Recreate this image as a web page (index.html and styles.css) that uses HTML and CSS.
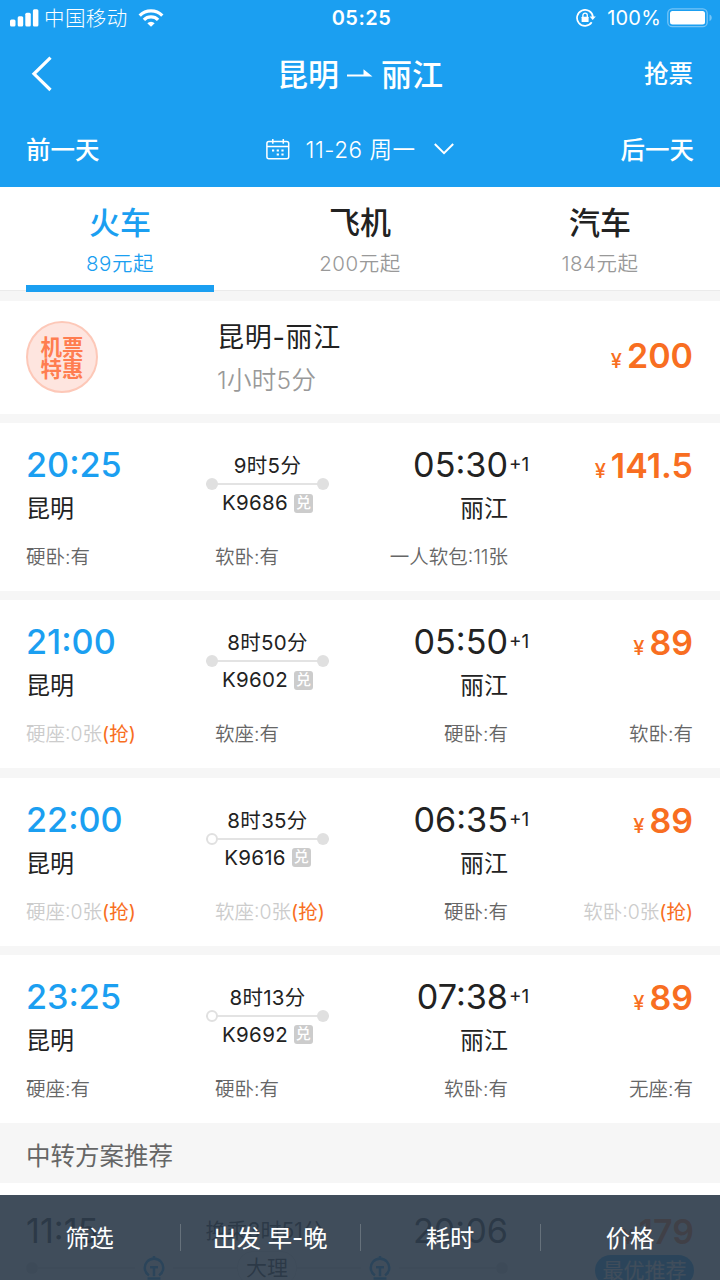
FILE: index.html
```html
<!DOCTYPE html>
<html lang="zh-CN">
<head>
    <meta charset="UTF-8">
    <meta name="viewport" content="width=device-width, initial-scale=1.0">
    <title>昆明 - 丽江</title>
    <link rel="stylesheet" href="styles.css">
</head>
<body>
    <div class="page">
        <header class="header">
            <div class="status">
                <div class="status-left">
                    <svg width="29" height="18" viewBox="0 0 29 18" fill="#fff">
                        <rect x="0" y="10.500" width="5.500" height="7" rx="1.500"/>
                        <rect x="7.700" y="7.300" width="5.500" height="10.200" rx="1.500"/>
                        <rect x="15.300" y="3.800" width="5.500" height="13.700" rx="1.500"/>
                        <rect x="22.900" y="0.300" width="5.500" height="17.200" rx="1.500"/>
                    </svg>
                    <span class="carrier">中国移动</span>
                    <svg width="26" height="18" viewBox="0 0 26 18" fill="none" stroke="#fff" stroke-width="3.300">
                        <path d="M1.700 6.600a16 16 0 0 1 22.600 0"/>
                        <path d="M5.900 10.900a10 10 0 0 1 14.200 0"/>
                        <path d="M9.300 14.200a5.300 5.300 0 0 1 7.400 0L13 17.800z" fill="#fff" stroke="none"/>
                    </svg>
                </div>
                <div class="status-time">05:25</div>
                <div class="status-right">
                    <svg width="20" height="18" viewBox="0 0 20 18" fill="none" stroke="#fff" stroke-width="1.700">
                        <path d="M15.700 13.300A8 8 0 1 1 17 8.200"/>
                        <path d="M13.600 7.500h6.200l-3.100 3.600z" fill="#fff" stroke="none"/>
                        <rect x="5.600" y="7.700" width="7" height="5.300" rx="0.600" fill="#fff" stroke="none"/>
                        <path d="M6.900 8V6.300a2.200 2.200 0 0 1 4.400 0V8" stroke-width="1.300"/>
                    </svg>
                    <span class="percent">100%</span>
                    <svg width="46" height="20" viewBox="0 0 46 20">
                        <rect x="0.800" y="0.800" width="39.400" height="17.900" rx="4.500" fill="none" stroke="#76c4f6" stroke-width="1.300"/>
                        <rect x="3" y="3" width="35" height="13.500" rx="2.500" fill="#fff"/>
                        <path d="M42.500 6.500c3 1 3 5.500 0 6.500z" fill="#76c4f6"/>
                    </svg>
                </div>
            </div>
            <div class="nav">
                <svg class="back" width="22" height="36" viewBox="0 0 22 36" fill="none" stroke="#fff" stroke-width="3.200">
                    <path d="M19.500 1.600L3 17.800 19.500 34"/>
                </svg>
                <div class="title">
                    <span>昆明</span>
                    <svg width="26" height="10" viewBox="0 0 26 10" fill="#fff">
                        <path d="M0 5.500h16.500V0.300L25.500 7.500H0z"/>
                    </svg>
                    <span>丽江</span>
                </div>
                <div class="grab">抢票</div>
            </div>
            <div class="days">
                <div class="day">前一天</div>
                <div class="date">
                    <svg width="24" height="21" viewBox="0 0 24 21" fill="none" stroke="#fff" stroke-width="1.500">
                        <rect x="0.900" y="2.600" width="21.800" height="17.200" rx="2"/>
                        <path d="M1 7.400h21.600M6.800 0v4.700M17.300 0v4.700"/>
                        <path d="M6 11.500h2.200M10.700 11.500h2.200M15.400 11.500h2.200M10.700 15.500h2.200M15.400 15.500h2.200" stroke-width="2"/>
                    </svg>
                    <span class="date-text">11-26 周一</span>
                    <svg width="20" height="12" viewBox="0 0 20 12" fill="none" stroke="#fff" stroke-width="2">
                        <path d="M0.800 1l9.200 9.200L19.200 1"/>
                    </svg>
                </div>
                <div class="day">后一天</div>
            </div>
        </header>

        <div class="tabs">
            <div class="tab active">
                <div class="tab-name">火车</div>
                <div class="tab-price">89元起</div>
            </div>
            <div class="tab">
                <div class="tab-name">飞机</div>
                <div class="tab-price">200元起</div>
            </div>
            <div class="tab">
                <div class="tab-name">汽车</div>
                <div class="tab-price">184元起</div>
            </div>
        </div>

        <div class="flight">
            <div class="badge">机票<br>特惠</div>
            <div class="flight-info">
                <div class="flight-name">昆明-丽江</div>
                <div class="flight-time">1小时5分</div>
            </div>
            <div class="price"><span class="yen">¥</span>200</div>
        </div>

        <div class="train">
            <div class="main">
                <div class="from">
                    <div class="time">20:25</div>
                    <div class="city">昆明</div>
                </div>
                <div class="middle">
                    <div class="duration">9时5分</div>
                    <div class="line"><i></i><i></i></div>
                    <div class="number">K9686<span class="swap">兑</span></div>
                </div>
                <div class="to">
                    <div class="time">05:30<span class="plus">+1</span></div>
                    <div class="city">丽江</div>
                </div>
                <div class="price"><span class="yen">¥</span>141.5</div>
            </div>
            <div class="seats">
                <div>硬卧:有</div>
                <div>软卧:有</div>
                <div>一人软包:11张</div>
            </div>
        </div>

        <div class="train">
            <div class="main">
                <div class="from">
                    <div class="time">21:00</div>
                    <div class="city">昆明</div>
                </div>
                <div class="middle">
                    <div class="duration">8时50分</div>
                    <div class="line"><i></i><i></i></div>
                    <div class="number">K9602<span class="swap">兑</span></div>
                </div>
                <div class="to">
                    <div class="time">05:50<span class="plus">+1</span></div>
                    <div class="city">丽江</div>
                </div>
                <div class="price"><span class="yen">¥</span>89</div>
            </div>
            <div class="seats">
                <div class="none">硬座:0张<b>(抢)</b></div>
                <div>软座:有</div>
                <div>硬卧:有</div>
                <div>软卧:有</div>
            </div>
        </div>

        <div class="train">
            <div class="main">
                <div class="from">
                    <div class="time">22:00</div>
                    <div class="city">昆明</div>
                </div>
                <div class="middle">
                    <div class="duration">8时35分</div>
                    <div class="line"><i class="hollow"></i><i></i></div>
                    <div class="number">K9616<span class="swap">兑</span></div>
                </div>
                <div class="to">
                    <div class="time">06:35<span class="plus">+1</span></div>
                    <div class="city">丽江</div>
                </div>
                <div class="price"><span class="yen">¥</span>89</div>
            </div>
            <div class="seats">
                <div class="none">硬座:0张<b>(抢)</b></div>
                <div class="none">软座:0张<b>(抢)</b></div>
                <div>硬卧:有</div>
                <div class="none">软卧:0张<b>(抢)</b></div>
            </div>
        </div>

        <div class="train">
            <div class="main">
                <div class="from">
                    <div class="time">23:25</div>
                    <div class="city">昆明</div>
                </div>
                <div class="middle">
                    <div class="duration">8时13分</div>
                    <div class="line"><i class="hollow"></i><i></i></div>
                    <div class="number">K9692<span class="swap">兑</span></div>
                </div>
                <div class="to">
                    <div class="time">07:38<span class="plus">+1</span></div>
                    <div class="city">丽江</div>
                </div>
                <div class="price"><span class="yen">¥</span>89</div>
            </div>
            <div class="seats">
                <div>硬座:有</div>
                <div>硬卧:有</div>
                <div>软卧:有</div>
                <div>无座:有</div>
            </div>
        </div>

        <div class="section">中转方案推荐</div>

        <div class="transfer">
            <div class="route">
                <div class="route-top">
                    <div class="time">11:15</div>
                    <div class="change">换乘3时51分</div>
                    <div class="time">20:06</div>
                </div>
                <div class="route-line">
                    <i></i><s></s>
                    <svg class="rail" width="22" height="24" viewBox="0 0 22 24" fill="none" stroke="#1a9ff1" stroke-width="2.600">
                        <path d="M6 19.500a9.200 9.200 0 1 1 10 0M11 0v3M7 11.300h8M11 11.300v9M4.500 22.500h13"/>
                    </svg>
                    <s class="short"></s><span class="via">大理</span><s class="short"></s>
                    <svg class="rail" width="22" height="24" viewBox="0 0 22 24" fill="none" stroke="#1a9ff1" stroke-width="2.600">
                        <path d="M6 19.500a9.200 9.200 0 1 1 10 0M11 0v3M7 11.300h8M11 11.300v9M4.500 22.500h13"/>
                    </svg>
                    <s></s><i></i>
                </div>
            </div>
            <div class="transfer-price">
                <div class="price"><span class="yen">¥</span>179</div>
                <div class="best">最优推荐</div>
            </div>
        </div>

        <div class="footer">
            <div class="filter">筛选</div>
            <div class="filter">出发 早-晚</div>
            <div class="filter">耗时</div>
            <div class="filter">价格</div>
        </div>
    </div>
</body>
</html>
```

FILE: styles.css
```css
* {
    box-sizing: border-box;
}

body {
    margin: 0;
    background-color: #f6f6f6;
    color: #222;
    font-family: Inter, "Noto Sans CJK SC", sans-serif;
}

.page {
    position: relative;
    width: 720px;
    height: 1280px;
    overflow: hidden;
}

svg {
    display: block;
    flex: none;
}

/* header */
.header {
    height: 187px;
    background-color: #1b9ff1;
    color: #fff;
}

.status {
    display: grid;
    grid-template-columns: 1fr auto 1fr;
    align-items: center;
    height: 36px;
    padding: 0 7px 0 10px;
    font-size: 20px;
}

.status-left,
.status-right {
    display: flex;
    align-items: center;
}

.status-right {
    justify-content: flex-end;
}

.carrier {
    margin: -2px 10px 0 5px;
    font-size: 20.5px;
    font-weight: 300;
    letter-spacing: 0.4px;
}

.status-time {
    font-weight: 600;
    letter-spacing: 0.5px;
}

.percent {
    margin: 0 6px 0 11px;
    letter-spacing: 0.2px;
}

.nav {
    display: grid;
    grid-template-columns: 1fr auto 1fr;
    align-items: center;
    height: 75px;
    padding: 0 27px;
}

.back {
    margin-left: 4px;
}

.title {
    display: flex;
    align-items: center;
    gap: 8px;
    font-size: 31px;
    font-weight: 500;
}

.title span {
    margin-top: -3px;
}

.grab {
    margin-top: -2px;
    font-size: 24.5px;
    font-weight: 500;
    text-align: right;
}

.days {
    display: grid;
    grid-template-columns: 1fr auto 1fr;
    align-items: center;
    height: 76px;
    padding: 0 26px;
}

.day {
    margin-top: -2px;
    font-size: 24.5px;
    font-weight: 500;
}

.day:last-child {
    text-align: right;
}

.date {
    display: flex;
    align-items: center;
    font-size: 22.5px;
}

.date-text {
    margin: -2px 19px 0 16px;
    font-weight: 350;
    letter-spacing: 0.5px;
}

/* tabs */
.tabs {
    display: grid;
    grid-template-columns: repeat(3, 1fr);
    height: 104px;
    margin-bottom: 10px;
    padding-top: 15px;
    background-color: #fff;
    border-bottom: 1px solid #ebebeb;
    text-align: center;
}

.tab {
    position: relative;
}

.tab-name {
    font-size: 31px;
    font-weight: 500;
    line-height: 42px;
}

.tab-price {
    color: #999;
    font-size: 20.5px;
    font-weight: 350;
    letter-spacing: 0.5px;
    line-height: 39px;
}

.active,
.active .tab-price {
    color: #1b9ff1;
}

.active::after {
    content: "";
    position: absolute;
    left: 26px;
    right: 26px;
    bottom: -2px;
    height: 7px;
    background-color: #1b9ff1;
}

/* cheap flight */
.flight {
    display: flex;
    align-items: center;
    height: 113px;
    margin-bottom: 9px;
    padding: 0 27px 0 26px;
    background-color: #fff;
}

.badge {
    width: 72px;
    height: 72px;
    margin: -1px 119px 0 0;
    padding-top: 13px;
    border: 2px solid #fdc8b8;
    border-radius: 50%;
    background-color: #fee5df;
    color: #ff7d50;
    font-size: 21.5px;
    font-weight: 700;
    line-height: 22px;
    text-align: center;
}

.flight-info {
    flex: 1;
    padding-top: 2px;
}

.flight-name {
    font-size: 27px;
    letter-spacing: 0.7px;
    line-height: 43px;
}

.flight-time {
    color: #999;
    font-size: 24.5px;
    font-weight: 350;
    letter-spacing: 0.3px;
    line-height: 43px;
}

.price {
    padding-top: 1px;
    color: #f86e21;
    font-size: 34px;
    font-weight: 600;
    line-height: 40px;
    text-align: right;
    white-space: nowrap;
}

.yen {
    margin-right: 5px;
    font-size: 20px;
    font-weight: 500;
}

/* train cards */
.train {
    height: 168px;
    margin-bottom: 9.33px;
    padding: 22px 27px 0 26px;
    background-color: #fff;
}

.main {
    display: grid;
    grid-template-columns: 180px 123px 179px 185px;
}

.time {
    font-size: 34.2px;
    line-height: 40px;
}

.from .time {
    color: #1b9ff1;
    font-weight: 500;
}

.to {
    text-align: right;
}

.to .time {
    position: relative;
}

.plus {
    position: absolute;
    left: 100%;
    top: 0;
    padding-left: 1px;
    font-size: 19px;
}

.city {
    padding-top: 1px;
    font-size: 24px;
    line-height: 46px;
}

.middle {
    padding-top: 9px;
    font-size: 20.5px;
    letter-spacing: 0.3px;
    line-height: 24px;
    text-align: center;
}

.line {
    display: flex;
    align-items: center;
    justify-content: space-between;
    height: 12px;
    background: linear-gradient(#e3e3e3, #e3e3e3) center / 100% 2px no-repeat;
}

.line i {
    width: 12px;
    height: 12px;
    border-radius: 50%;
    background-color: #e0e0e0;
}

.line .hollow {
    border: 2px solid #e0e0e0;
    background-color: #fff;
}

.number {
    display: flex;
    align-items: center;
    justify-content: center;
    padding-top: 1px;
}

.swap {
    width: 19px;
    height: 19px;
    margin-left: 6px;
    border-radius: 3px;
    background-color: #ccc;
    color: #fff;
    font-size: 15px;
    font-weight: 500;
    line-height: 18px;
}

.seats {
    display: grid;
    grid-template-columns: 189px 110px 183px 185px;
    padding-top: 14px;
    color: #666;
    font-size: 19.5px;
    font-weight: 350;
    line-height: 22px;
    white-space: nowrap;
}

.seats div:nth-child(n+3) {
    text-align: right;
}

.none {
    color: #ccc;
}

.none b {
    color: #f86e21;
    font-weight: 400;
}

/* transfer plans */
.section {
    height: 60px;
    padding-left: 26px;
    color: #666;
    font-size: 24.5px;
    line-height: 66px;
    margin-top: -9px;
}

.transfer {
    display: flex;
    justify-content: space-between;
    height: 110px;
    padding: 28px 26px 0;
    background-color: #fff;
}

.route {
    width: 482px;
}

.route-top {
    display: flex;
    justify-content: space-between;
}

.change {
    padding-left: 18px;
    font-size: 21px;
    line-height: 40px;
}

.route-line {
    display: flex;
    align-items: center;
    height: 34px;
}

.route-line i {
    width: 12px;
    height: 12px;
    border-radius: 50%;
    background-color: #ddd;
}

.route-line s {
    flex: 1;
    height: 2px;
    background-color: #e3e3e3;
}

.route-line .short {
    flex: none;
    width: 64px;
}

.rail {
    margin: 0 8px;
}

.via {
    padding: 0 8px;
    border: 1px solid #e3e3e3;
    border-radius: 16px;
    font-size: 21px;
    line-height: 32px;
}

.transfer-price {
    margin-top: 1px;
}

.transfer-price .price {
    padding-top: 0;
}

.best {
    width: 99px;
    margin-top: -2px;
    border-radius: 16px;
    background-color: #1b9ff1;
    color: #fff;
    font-size: 21px;
    line-height: 31px;
    text-align: center;
}

/* bottom filter bar, the list shows through */
.footer {
    position: absolute;
    left: 0;
    right: 0;
    bottom: 0;
    display: grid;
    grid-template-columns: repeat(4, 1fr);
    align-items: center;
    height: 85px;
    background-color: rgba(45, 59, 75, 0.91);
    color: #fff;
    font-size: 24.3px;
    text-align: center;
}

.filter {
    padding: 1px 1px 0 0;
    line-height: 26px;
}

.filter + .filter {
    border-left: 1px solid #66717b;
}
```
